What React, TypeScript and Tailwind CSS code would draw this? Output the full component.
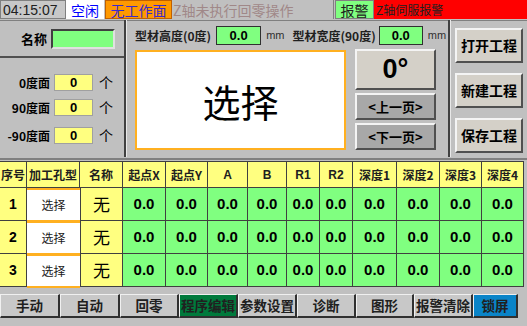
import React from "react";

const F = { fontFamily: '"Liberation Sans", "Noto Sans CJK SC", sans-serif' };
const C = { fontFamily: '"Noto Sans CJK SC", "Liberation Sans", sans-serif' };

const heads = ["序号", "加工孔型", "名称", "起点X", "起点Y", "A", "B", "R1", "R2", "深度1", "深度2", "深度3", "深度4"];

function Btn({ children, className }: { children: React.ReactNode; className: string }) {
  return (
    <div className={"flex items-center justify-center border-t-2 border-l-2 border-t-[#f4f4f4] border-l-[#f4f4f4] border-b-2 border-r-2 border-b-[#505050] border-r-[#505050] " + className}>
      {children}
    </div>
  );
}

export default function App() {
  return (
    <div className="w-[527px] h-[326px] bg-[#c0c0c0] overflow-hidden text-black" style={F}>
      {/* top status bar */}
      <div className="flex h-[19px] text-[14px] leading-none">
        <div className="w-[66px] flex items-center pl-[2px] bg-[#c8c8c8] border border-[#808080] text-[#202020]">04:15:07</div>
        <div className="w-[38px] flex items-center justify-center bg-white text-[#0000ff]" style={C}>空闲</div>
        <div className="w-[67px] ml-px flex items-center justify-center bg-[#ff9900] text-[#3a2ad0] border border-[#c06000]" style={C}>无工作面</div>
        <div className="w-[162px] flex items-center pl-[1px] bg-[#c0c0c0] text-[#a08888] border-r border-[#808080]" style={C}>Z轴未执行回零操作</div>
        <div className="w-[39px] ml-px flex items-center justify-center bg-[#80ff80] text-[#202020] border border-[#808080]" style={C}>报警</div>
        <div className="flex-1 flex items-center pl-[2px] bg-[#ff0000] text-[#202020] text-[12px]" style={C}>Z轴伺服报警</div>
      </div>

      {/* main area */}
      <div className="flex h-[137px] mt-[1px]">
        {/* left panel */}
        <div className="w-[124px] flex flex-col border-t border-[#808080]">
          <div className="h-[37px] flex items-center border-b-2 border-[#505050]">
            <span className="ml-[19px] text-[13px] font-bold w-[28px] whitespace-nowrap text-right" style={C}>名称</span>
            <div className="ml-[4px] w-[64px] h-[20px] bg-[#80ff80] border-2 border-t-[#404040] border-l-[#404040] border-b-[#e0e0e0] border-r-[#e0e0e0]" />
          </div>
          {[["0度面", "0", "mt-[16px]"], ["90度面", "0", "mt-[8px]"], ["-90度面", "0", "mt-[11px]"]].map(([l, v, m], i) => (
            <div key={i} className={"flex items-center h-[17px] " + m}>
              <span className="w-[50px] text-right text-[12px] font-bold whitespace-nowrap" style={C}>{l}</span>
              <div className="ml-[4px] w-[39px] h-[17px] bg-[#ffff80] border border-[#a0a0a0] flex items-center justify-center text-[13px] font-bold">{v}</div>
              <span className="ml-[6px] text-[14px]" style={C}>个</span>
            </div>
          ))}
        </div>
        {/* separator */}
        <div className="w-[3px] border-l-2 border-[#404040] bg-[#e8e8e8]" />
        {/* middle panel */}
        <div className="w-[321px] flex flex-col border-t border-[#808080]">
          <div className="h-[29px] flex items-center text-[12px]">
            <span className="ml-[8px] font-bold text-[#202020]" style={C}>型材高度(0度)</span>
            <div className="ml-[5px] w-[45px] h-[19px] bg-[#80ff80] border border-[#303030] flex items-center justify-center font-bold text-[13px]">0.0</div>
            <span className="ml-[5px] text-[11px] text-[#303030]">mm</span>
            <span className="ml-[8px] font-bold text-[#202020]" style={C}>型材宽度(90度)</span>
            <div className="ml-[3px] w-[44px] h-[19px] bg-[#80ff80] border border-[#303030] flex items-center justify-center font-bold text-[13px]">0.0</div>
            <span className="ml-[5px] text-[11px] text-[#303030]">mm</span>
          </div>
          <div className="flex">
            <div className="ml-[8px] w-[211px] h-[100px] bg-white border-2 border-[#ffb020] flex items-center justify-center text-[38px]" style={C}>选择</div>
            <div className="ml-[9px] w-[81px] flex flex-col gap-[3px] -mt-[1px]">
              <Btn className="h-[41px] bg-[#d4d0c8] text-[27px] font-bold">0°</Btn>
              <Btn className="h-[27px] bg-[#a8a8a8] text-[13px] font-bold"><span style={C}>&lt;上一页&gt;</span></Btn>
              <Btn className="h-[27px] bg-[#a8a8a8] text-[13px] font-bold"><span style={C}>&lt;下一页&gt;</span></Btn>
            </div>
          </div>
        </div>
        <div className="w-[3px] border-l-2 border-[#404040] bg-[#e8e8e8]" />
        {/* right panel */}
        <div className="flex-1 flex flex-col items-center pt-[7px] gap-[10px] border-t border-[#808080]">
          {["打开工程", "新建工程", "保存工程"].map((t) => (
            <Btn key={t} className="w-[68px] h-[35px] bg-[#d4d0c8] text-[14px] font-bold">
              <span style={C}>{t}</span>
            </Btn>
          ))}
        </div>
      </div>

      {/* table */}
      <div className="mt-[1px] border-t-2 border-[#808080] pt-[1px]">
        <div className="grid grid-cols-[27px_53px_43px_43px_42px_40px_39px_33px_33px_44px_43px_42px_42px] grid-rows-[26px_33px_33px_33px] w-[524px] border-t border-[#404040] border-r border-r-[#404040]">
          {heads.map((h, i) => (
            <div key={h} className="bg-[#ffff80] flex items-center justify-center text-[12px] font-bold border-b border-r border-[#404040] text-[#202020] whitespace-nowrap" style={i < 3 || h.includes("深") || h.includes("起") ? C : F}>
              {h}
            </div>
          ))}
          {[1, 2, 3].map((r) => (
            <React.Fragment key={r}>
              <div className="bg-[#ffff80] flex items-center justify-center text-[14px] font-bold border-b border-r border-[#404040]">{r}</div>
              <div className="bg-white flex items-center justify-center text-[12px] text-[#202020] border-y-2 border-[#ffb020] -mb-px" style={C}>选择</div>
              <div className="bg-[#ffff80] flex items-center justify-center text-[17px] border-b border-r border-l border-[#404040]" style={C}>无</div>
              {Array.from({ length: 10 }).map((_, j) => (
                <div key={j} className="bg-[#80ff80] flex items-center justify-center text-[15px] font-bold border-b border-r border-[#404040]">0.0</div>
              ))}
            </React.Fragment>
          ))}
        </div>
      </div>

      {/* bottom nav */}
      <div className="flex mt-[7px] h-[24px]">
        {[
          ["手动", 60, "bg-[#c8c8c8]"],
          ["自动", 60, "bg-[#c8c8c8]"],
          ["回零", 59, "bg-[#c8c8c8]"],
          ["程序编辑", 59, "bg-[#007a3c]"],
          ["参数设置", 59, "bg-[#c8c8c8]"],
          ["诊断", 59, "bg-[#c8c8c8]"],
          ["图形", 58, "bg-[#c8c8c8]"],
          ["报警清除", 59, "bg-[#c8c8c8]"],
          ["锁屏", 45, "bg-[#0a84c8]"],
        ].map(([t, w, bg]) => (
          <div
            key={t as string}
            className={"shrink-0 flex items-center justify-center text-[13.5px] font-bold text-[#202020] whitespace-nowrap border-t border-l border-t-[#f0f0f0] border-l-[#f0f0f0] border-b-2 border-r-2 border-b-[#303030] border-r-[#303030] " + bg}
            style={{ ...C, width: w as number }}
          >
            {t}
          </div>
        ))}
      </div>
    </div>
  );
}
